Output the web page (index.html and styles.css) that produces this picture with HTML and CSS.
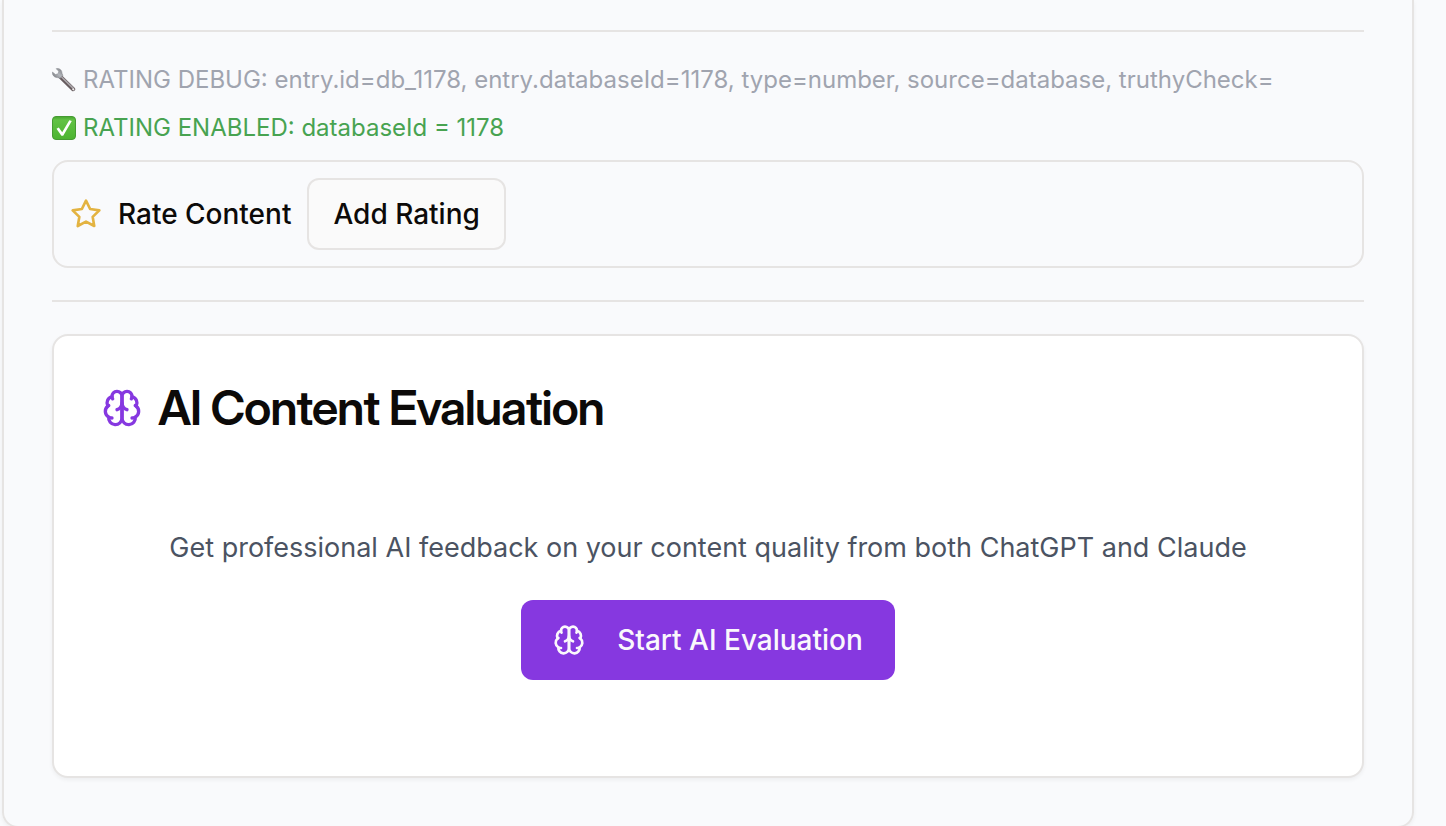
FILE: index.html
```html
<!DOCTYPE html>
<html lang="en">
<head>
<meta charset="utf-8">
<title>Content evaluation</title>
<link rel="stylesheet" href="styles.css">
</head>
<body>
<svg class="sprite" aria-hidden="true">
  <symbol id="brain" viewBox="0 0 24 24">
    <path d="M12 5a3 3 0 1 0-5.997.125 4 4 0 0 0-2.526 5.77 4 4 0 0 0 .556 6.588A4 4 0 1 0 12 18Z"/>
    <path d="M12 5a3 3 0 1 1 5.997.125 4 4 0 0 1 2.526 5.77 4 4 0 0 1-.556 6.588A4 4 0 1 1 12 18Z"/>
    <path d="M15 13a4.5 4.5 0 0 1-3-4 4.5 4.5 0 0 1-3 4"/>
    <path d="M17.599 6.5a3 3 0 0 0 .399-1.375"/>
    <path d="M6.003 5.125A3 3 0 0 0 6.401 6.5"/>
    <path d="M3.477 10.896a4 4 0 0 1 .585-.396"/>
    <path d="M19.938 10.5a4 4 0 0 1 .585.396"/>
    <path d="M6 18a4 4 0 0 1-1.967-.516"/>
    <path d="M19.967 17.484A4 4 0 0 1 18 18"/>
  </symbol>
</svg>
<main class="panel">
  <section class="rating-section">
    <p class="status status-debug">
      <svg class="emoji" viewBox="0 0 24 24" aria-hidden="true">
        <defs>
          <linearGradient id="steel" x1="0" y1="1" x2="1" y2="0">
            <stop offset="0" stop-color="#6c6d73"/>
            <stop offset="0.5" stop-color="#b4b7bc"/>
            <stop offset="1" stop-color="#77787e"/>
          </linearGradient>
        </defs>
        <path d="M8.4 8.7 21.2 21.2" stroke="#665b5e" stroke-width="4" stroke-linecap="round"/>
        <path d="M8.6 8 20.800 19.900" stroke="#aaa6aa" stroke-width="1.600" stroke-linecap="round"/>
        <path d="M4.2.7C6.8-.1 9.6 1.700 9.900 4.400C10 5.700 10.200 6.200 11 7.200L8 10.500C6.700 9.600 5.800 9.700 4.500 9.500C2 9.200 0 6.800.5 4.100L3.500 6.600L6.200 5.700L6.700 3.200Z" fill="url(#steel)" stroke="#7e8086" stroke-width=".5"/>
        <circle cx="21.300" cy="21.300" r="1.100" fill="#f2efef"/>
      </svg>
      <span>RATING DEBUG: entry.id=db_1178, entry.databaseId=1178, type=number, source=database, truthyCheck=</span>
    </p>
    <p class="status status-enabled">
      <svg class="emoji" viewBox="0 0 24 24" aria-hidden="true">
        <defs>
          <linearGradient id="leaf" x1="0" y1="0" x2="0" y2="1">
            <stop offset="0" stop-color="#47a52f"/>
            <stop offset="0.15" stop-color="#62c245"/>
            <stop offset="1" stop-color="#4cb431"/>
          </linearGradient>
        </defs>
        <rect x=".5" y=".5" width="23" height="23" rx="3.500" fill="url(#leaf)" stroke="#469b33"/>
        <path d="M4.500 12.800 6.800 11.500 10.200 16.200 17.300 4.200 19.800 5 11.200 19.700H9.400Z" fill="#fff"/>
      </svg>
      <span>RATING ENABLED: databaseId = 1178</span>
    </p>
    <div class="rate-box">
      <svg class="icon icon-star" viewBox="0 0 24 24" aria-hidden="true"><path d="M12 2 15.090 8.260 22 9.270 17 14.140 18.180 21.020 12 17.770 5.820 21.020 7 14.140 2 9.270 8.910 8.260Z"/></svg>
      <span class="rate-label">Rate Content</span>
      <button class="button-outline" type="button">Add Rating</button>
    </div>
  </section>
  <section class="evaluation-section">
    <article class="card">
      <h2 class="card-title"><svg class="icon icon-large" aria-hidden="true"><use href="#brain"/></svg>AI Content Evaluation</h2>
      <div class="card-body">
        <p class="card-text">Get professional AI feedback on your content quality from both ChatGPT and Claude</p>
        <button class="button-primary" type="button"><svg class="icon" aria-hidden="true"><use href="#brain"/></svg>Start AI Evaluation</button>
      </div>
    </article>
  </section>
</main>
</body>
</html>
```
FILE: styles.css
```css
:root {
  --line: #e6e4e3;
  --ink: #0c0a09;
  --violet: #8638e0;
  --page: #f9fafc;
}

* { box-sizing: border-box; }

body {
  margin: 0;
  background: var(--page);
  color: var(--ink);
  font-family: Inter, "Liberation Sans", sans-serif;
  font-size: 28px;
  line-height: 40px;
}

p, h2 { margin: 0; }

.sprite { display: none; }

.panel {
  margin: 0 32px 0 2px;
  padding: 30px 48px 48px;
  border: 2px solid var(--line);
  border-top: 0;
  border-radius: 0 0 16px 16px;
  box-shadow: 0 2px 4px rgba(0, 0, 0, 0.05);
}

.rating-section,
.evaluation-section {
  border-top: 2px solid var(--line);
  padding-top: 32px;
}

.rating-section { padding-bottom: 32px; }

.status {
  display: flex;
  align-items: center;
  gap: 7px;
  margin-bottom: 16px;
  font-size: 24px;
  line-height: 32px;
}

.status-debug { color: #a0a4af; }
.status-enabled { color: #48a351; }

.emoji {
  flex: none;
  width: 24px;
  height: 24px;
  fill: none;
}

.icon {
  flex: none;
  width: 32px;
  height: 32px;
  fill: none;
  stroke: currentColor;
  stroke-width: 2;
  stroke-linecap: round;
  stroke-linejoin: round;
}

.icon-large { width: 40px; height: 40px; color: var(--violet); }
.icon-star { color: #e3b341; }

.rate-box {
  display: flex;
  align-items: center;
  gap: 16px;
  padding: 16px;
  border: 2px solid var(--line);
  border-radius: 16px;
}

.rate-label { font-weight: 500; }

button {
  font: inherit;
  font-weight: 500;
  cursor: pointer;
}

.button-outline {
  padding: 14px 24px;
  border: 2px solid var(--line);
  border-radius: 12px;
  background: #fafafa;
  color: var(--ink);
}

.card {
  padding: 48px;
  border: 2px solid var(--line);
  border-radius: 16px;
  background: #fff;
  box-shadow: 0 2px 4px rgba(0, 0, 0, 0.05);
}

.card-title {
  display: flex;
  align-items: center;
  gap: 16px;
  font-family: "Inter Display", Inter, "Liberation Sans", sans-serif;
  font-variation-settings: "opsz" 32;
  font-size: 48px;
  line-height: 48px;
  font-weight: 600;
  letter-spacing: -0.025em;
}

.card-body {
  display: flex;
  flex-direction: column;
  align-items: center;
  gap: 32px;
  padding: 96px 0 48px;
  text-align: center;
}

.card-text {
  color: #4b5362;
  font-size: 27px;
}

.button-primary {
  display: flex;
  align-items: center;
  gap: 32px;
  padding: 20px 32px;
  border: 0;
  border-radius: 12px;
  background: var(--violet);
  color: #faf8fc;
}
```
